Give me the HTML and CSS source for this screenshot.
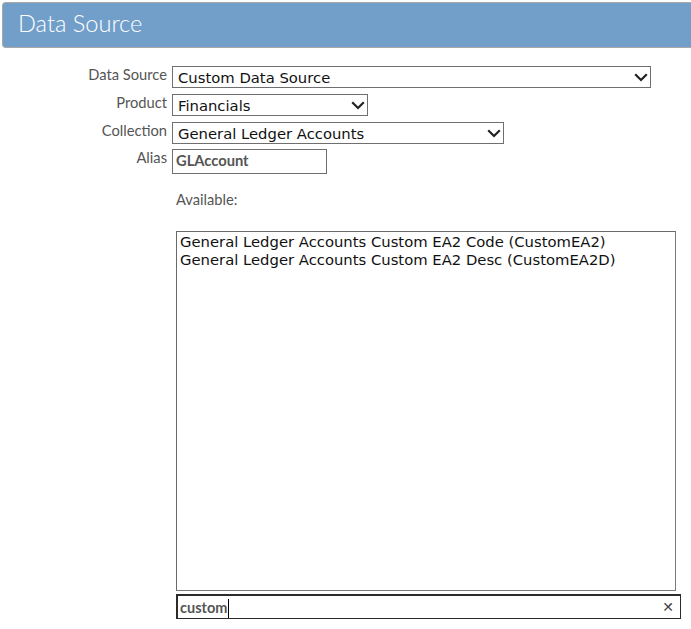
FILE: index.html
```html
<!DOCTYPE html>
<html>
<head>
<meta charset="utf-8">
<link rel="stylesheet" href="styles.css">
</head>
<body>
<div class="header"><h1 class="title">Data Source</h1></div>
<div class="form">
  <div class="row">
    <label class="label">Data Source</label>
    <div class="select sel-ds"><span>Custom Data Source</span><svg class="chev" width="14" height="9" viewBox="0 0 14 9"><path d="M1.2 1.2 L7 7 L12.8 1.2" fill="none" stroke="#222" stroke-width="2.2"/></svg></div>
  </div>
  <div class="row">
    <label class="label">Product</label>
    <div class="select sel-prod"><span>Financials</span><svg class="chev" width="14" height="9" viewBox="0 0 14 9"><path d="M1.2 1.2 L7 7 L12.8 1.2" fill="none" stroke="#222" stroke-width="2.2"/></svg></div>
  </div>
  <div class="row">
    <label class="label">Collection</label>
    <div class="select sel-coll"><span>General Ledger Accounts</span><svg class="chev" width="14" height="9" viewBox="0 0 14 9"><path d="M1.2 1.2 L7 7 L12.8 1.2" fill="none" stroke="#222" stroke-width="2.2"/></svg></div>
  </div>
  <div class="row row-alias">
    <label class="label">Alias</label>
    <div class="input alias">GLAccount</div>
  </div>
</div>
<div class="available">
  <div class="avail-label">Available:</div>
  <div class="listbox">
    <div class="opt">General Ledger Accounts Custom EA2 Code (CustomEA2)</div>
    <div class="opt">General Ledger Accounts Custom EA2 Desc (CustomEA2D)</div>
  </div>
  <div class="search"><span class="search-text">custom</span><span class="caret"></span><span class="clear">✕</span></div>
</div>
</body>
</html>
```
FILE: styles.css
```css
* { box-sizing: border-box; }
body {
  margin: 0;
  background: #fff;
  font-family: Lato, "Open Sans", sans-serif;
}
.header {
  margin: 2px 0 0 2px;
  height: 46px;
  background: #729fca;
  border: 1px solid #a9a9a9;
  border-right: none;
  border-radius: 4px 0 0 4px;
  display: flex;
  align-items: center;
  padding-left: 15px;
}
.title {
  margin: 0;
  font-family: Lato, sans-serif;
  font-weight: 300;
  font-size: 23.6px;
  color: #fff;
  position: relative;
  top: -2px;
}
.form {
  margin-top: 18px;
  display: flex;
  flex-direction: column;
  gap: 6px;
}
.row {
  display: flex;
  align-items: flex-start;
  gap: 5px;
  height: 22px;
}
.row-alias { height: 25px; margin-top: -1px; }
.label {
  width: 167px;
  text-align: right;
  font-size: 14.7px;
  color: #555;
  line-height: 17px;
}
.select {
  height: 22px;
  border: 1px solid #6f6f6f;
  background: #fff;
  display: flex;
  align-items: center;
  justify-content: space-between;
  padding: 0 2px 0 5px;
  font-family: "DejaVu Sans", Verdana, sans-serif;
  font-size: 14.8px;
  color: #111;
}
.chev { margin-top: 1px; }
.sel-ds { width: 479px; }
.sel-prod { width: 196px; }
.sel-coll { width: 332px; }
.input {
  height: 25px;
  border: 1px solid #6f6f6f;
  background: #fff;
}
.alias {
  width: 155px;
  font-weight: 700;
  font-size: 14.7px;
  color: #555;
  padding: 1px 0 0 3px;
}
.available {
  margin-left: 176px;
  width: 505px;
}
.avail-label {
  margin-top: 17px;
  font-size: 14.7px;
  color: #555;
  height: 16px;
  line-height: 16px;
}
.listbox {
  margin-top: 24px;
  width: 500px;
  height: 360px;
  border: 1px solid #7a7a7a;
  border-top-color: #6a6a6a;
  border-left-color: #6a6a6a;
  padding: 1px 3px;
  font-family: "DejaVu Sans", Verdana, sans-serif;
  font-size: 14.8px;
  color: #111;
  line-height: 18px;
}
.search {
  margin-top: 3px;
  height: 25px;
  border: 2px solid #2b2b2b;
  border-right-width: 1px;
  border-bottom-width: 1px;
  display: flex;
  align-items: center;
  padding-left: 2px;
  font-size: 14.5px;
  color: #555;
  font-weight: 700;
}
.caret {
  width: 1px;
  height: 19px;
  background: #000;
  margin-left: 1px;
  margin-top: 3px;
}
.clear {
  margin-left: auto;
  margin-right: 6px;
  font-family: "DejaVu Sans", sans-serif;
  font-weight: 400;
  font-size: 14px;
  color: #444;
}
```
